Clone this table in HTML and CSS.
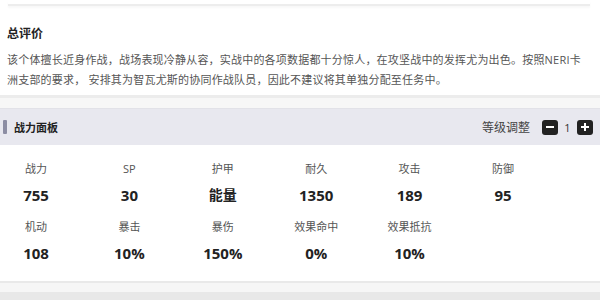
FILE: index.html
```html
<!DOCTYPE html>
<html lang="zh">
<head>
<meta charset="utf-8">
<link rel="stylesheet" href="styles.css">
</head>
<body>
<div class="prev-card"></div>
<section class="eval">
  <h3 class="eval-title">总评价</h3>
  <p class="eval-text">该个体擅长近身作战，战场表现冷静从容，实战中的各项数据都十分惊人，在攻坚战中的发挥尤为出色。按照NERI卡洲支部的要求， 安排其为智瓦尤斯的协同作战队员，因此不建议将其单独分配至任务中。</p>
</section>
<div class="gap-band"></div>
<section class="panel">
  <header class="panel-head">
    <span class="accent"></span>
    <span class="panel-title">战力面板</span>
    <div class="level">
      <span class="level-label">等级调整</span>
      <span class="btn"><svg width="10" height="10" viewBox="0 0 10 10"><rect x="1" y="4" width="8" height="2" fill="#fff"/></svg></span>
      <span class="level-num">1</span>
      <span class="btn"><svg width="10" height="10" viewBox="0 0 10 10"><rect x="1" y="4" width="8" height="2" fill="#fff"/><rect x="4" y="1" width="2" height="8" fill="#fff"/></svg></span>
    </div>
  </header>
  <div class="stats">
    <div class="stat"><span class="label">战力</span><span class="value">755</span></div>
    <div class="stat"><span class="label">SP</span><span class="value">30</span></div>
    <div class="stat"><span class="label">护甲</span><span class="value cjk">能量</span></div>
    <div class="stat"><span class="label">耐久</span><span class="value">1350</span></div>
    <div class="stat"><span class="label">攻击</span><span class="value">189</span></div>
    <div class="stat"><span class="label">防御</span><span class="value">95</span></div>
    <div class="stat"><span class="label">机动</span><span class="value">108</span></div>
    <div class="stat"><span class="label">暴击</span><span class="value">10%</span></div>
    <div class="stat"><span class="label">暴伤</span><span class="value">150%</span></div>
    <div class="stat"><span class="label">效果命中</span><span class="value">0%</span></div>
    <div class="stat"><span class="label">效果抵抗</span><span class="value">10%</span></div>
  </div>
</section>
<div class="bottom-band"></div>
<div class="next-head"></div>
</body>
</html>
```
FILE: styles.css
```css
* { box-sizing: border-box; }
html, body { margin: 0; padding: 0; background: #fff; }
body {
  font-family: "Open Sans", "Noto Sans CJK SC", sans-serif;
  color: #333;
  width: 600px;
  height: 300px;
  overflow: hidden;
}
.prev-card {
  height: 6px;
  margin: 0 10px 0 8px;
  border-bottom: 2px solid #ededed;
  box-shadow: 0 2px 2px rgba(0,0,0,0.03);
}
.eval {
  padding: 18px 14px 0 7px;
  height: 89px;
}
.eval-title {
  margin: 0 0 6px 0;
  font-size: 12px;
  line-height: 20px;
  font-weight: 700;
  color: #222;
}
.eval-text {
  margin: 0;
  font-size: 11px;
  line-height: 20px;
  color: #555;
  letter-spacing: 0.2px;
}
.gap-band {
  height: 14px;
  border-top: 3px solid #ececec;
  background: #f7f7f7;
  border-bottom: 1px solid #e2e2e8;
}
.panel-head {
  height: 36px;
  background: #e8e8ef;
  display: flex;
  align-items: center;
  padding: 0 7px 0 3px;
}
.accent {
  width: 4px;
  height: 14px;
  background: #8c8da3;
  border-radius: 1px;
}
.panel-title {
  margin-left: 7px;
  font-size: 11px;
  font-weight: 700;
  color: #222;
}
.level {
  margin-left: auto;
  display: flex;
  align-items: center;
}
.level-label {
  font-size: 12px;
  color: #444;
  margin-right: 12px;
}
.btn {
  width: 16px;
  height: 15px;
  background: #222;
  border-radius: 3px;
  display: flex;
  align-items: center;
  justify-content: center;
}
.level-num {
  width: 19px;
  text-align: center;
  font-size: 11px;
  color: #333;
}
.stats {
  display: grid;
  grid-template-columns: repeat(6, 60px);
  column-gap: 33.4px;
  row-gap: 15px;
  padding: 16px 0 20px 6px;
  height: 136px;
}
.stat {
  display: flex;
  flex-direction: column;
  align-items: center;
  gap: 9px;
}
.label {
  font-size: 11px;
  line-height: 16px;
  color: #555;
  white-space: nowrap;
}
.value {
  font-size: 15px;
  line-height: 18px;
  font-weight: 700;
  color: #222;
  white-space: nowrap;
}
.value.cjk {
  font-size: 14px;
}
.bottom-band {
  height: 11px;
  border-top: 2px solid #e9e9e9;
  background: #f6f6f6;
}
.next-head {
  height: 20px;
  background: #e8e8e8;
}
```
